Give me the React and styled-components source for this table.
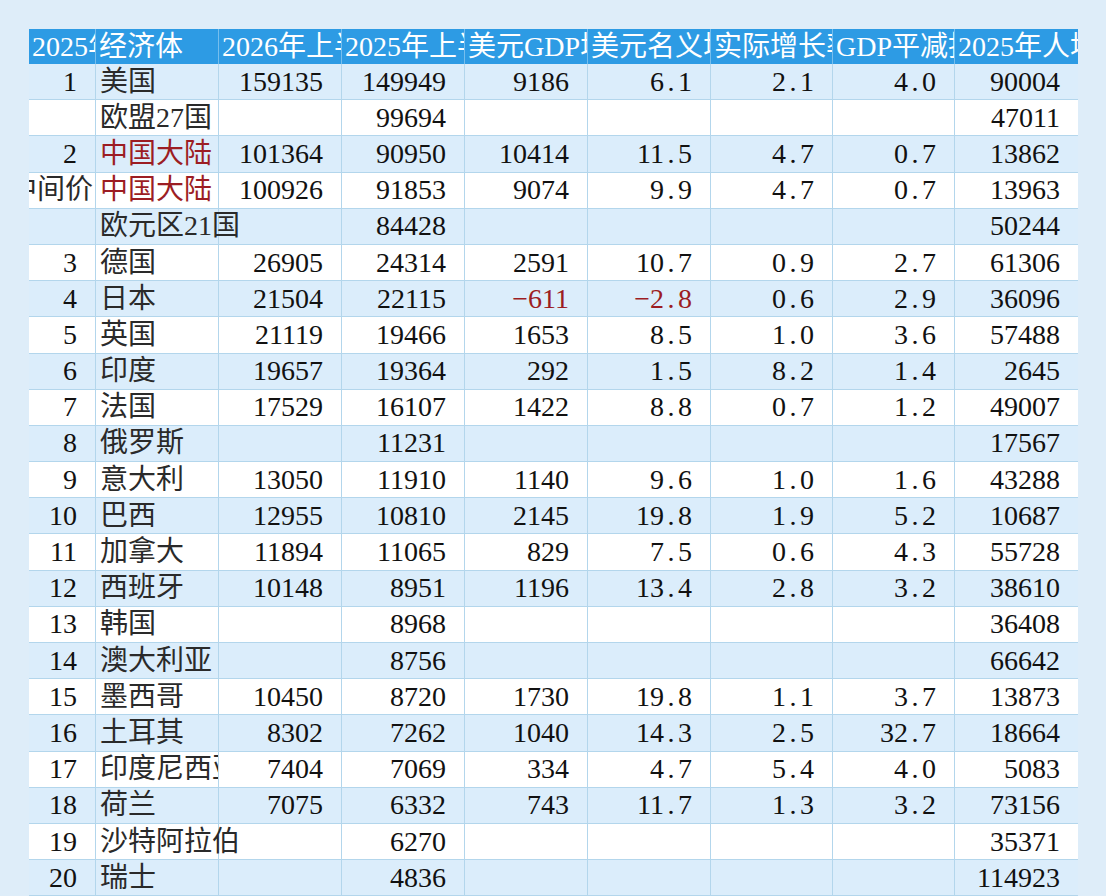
import React from "react";
import styled, { createGlobalStyle } from "styled-components";

const GlobalStyle = createGlobalStyle`
  html, body {
    margin: 0;
    padding: 0;
    background: #deedf9;
    overflow: hidden;
  }
  body {
    font-family: "Liberation Serif", "Noto Sans CJK SC", serif;
  }
`;

const COLS = "67px 123px 123px 123px 123px 123px 122px 122px 123px";

const Page = styled.div`
  width: 1106px;
  height: 896px;
  box-sizing: border-box;
  padding: 29px 28px 0 29px;
  background: #deedf9;
`;

const Table = styled.div`
  width: 1049px;
  display: flex;
  flex-direction: column;
`;

const HeaderRow = styled.div`
  display: grid;
  grid-template-columns: ${COLS};
  height: 35px;
  background: #2d9be4;
`;

const HeaderCell = styled.div`
  display: flex;
  align-items: center;
  justify-content: flex-start;
  overflow: hidden;
  white-space: nowrap;
  padding-left: 3px;
  border-right: 1px solid rgba(255, 255, 255, 0.35);
  color: #ffffff;
  font-size: 28px;
  line-height: 1;
  &:last-child {
    border-right: none;
  }
`;

const Row = styled.div`
  display: grid;
  grid-template-columns: ${COLS};
  height: 36.2px;
  box-sizing: border-box;
  border-bottom: 1px solid #b3d6ec;
  background: ${(p) => (p.$stripe ? "#dbedfb" : "#ffffff")};
`;

const Cell = styled.div`
  position: relative;
  z-index: ${(p) => (p.$spill ? 2 : 1)};
  display: flex;
  align-items: center;
  justify-content: ${(p) => (p.$align === "left" ? "flex-start" : "flex-end")};
  overflow: ${(p) => (p.$spill ? "visible" : "hidden")};
  white-space: nowrap;
  box-sizing: border-box;
  padding-left: ${(p) => (p.$align === "left" ? "4px" : "0")};
  padding-right: ${(p) => (p.$align === "left" ? "0" : `${p.$pr ?? 18}px`)};
  border-right: 1px solid #b3d6ec;
  font-size: 28px;
  line-height: 1;
  color: ${(p) => (p.$red ? "#9c1d23" : p.$cjk ? "#2a2a2a" : "#111111")};
  &:last-child {
    border-right: none;
  }
`;

const Text = styled.span`
  flex: none;
`;

const Dot = styled.span`
  display: inline-block;
  width: 0.5em;
  text-align: center;
`;

const headers = [
  "2025年排名",
  "经济体",
  "2026年上半年GDP",
  "2025年上半年GDP",
  "美元GDP增量",
  "美元名义增速",
  "实际增长率",
  "GDP平减指数",
  "2025年人均GDP",
];

const rows = [
  ["1", "美国", "159135", "149949", "9186", "6.1", "2.1", "4.0", "90004"],
  ["", "欧盟27国", "", "99694", "", "", "", "", "47011"],
  ["2", "中国大陆", "101364", "90950", "10414", "11.5", "4.7", "0.7", "13862", true],
  ["中间价", "中国大陆", "100926", "91853", "9074", "9.9", "4.7", "0.7", "13963", true],
  ["", "欧元区21国", "", "84428", "", "", "", "", "50244"],
  ["3", "德国", "26905", "24314", "2591", "10.7", "0.9", "2.7", "61306"],
  ["4", "日本", "21504", "22115", "-611", "-2.8", "0.6", "2.9", "36096"],
  ["5", "英国", "21119", "19466", "1653", "8.5", "1.0", "3.6", "57488"],
  ["6", "印度", "19657", "19364", "292", "1.5", "8.2", "1.4", "2645"],
  ["7", "法国", "17529", "16107", "1422", "8.8", "0.7", "1.2", "49007"],
  ["8", "俄罗斯", "", "11231", "", "", "", "", "17567"],
  ["9", "意大利", "13050", "11910", "1140", "9.6", "1.0", "1.6", "43288"],
  ["10", "巴西", "12955", "10810", "2145", "19.8", "1.9", "5.2", "10687"],
  ["11", "加拿大", "11894", "11065", "829", "7.5", "0.6", "4.3", "55728"],
  ["12", "西班牙", "10148", "8951", "1196", "13.4", "2.8", "3.2", "38610"],
  ["13", "韩国", "", "8968", "", "", "", "", "36408"],
  ["14", "澳大利亚", "", "8756", "", "", "", "", "66642"],
  ["15", "墨西哥", "10450", "8720", "1730", "19.8", "1.1", "3.7", "13873"],
  ["16", "土耳其", "8302", "7262", "1040", "14.3", "2.5", "32.7", "18664"],
  ["17", "印度尼西亚", "7404", "7069", "334", "4.7", "5.4", "4.0", "5083"],
  ["18", "荷兰", "7075", "6332", "743", "11.7", "1.3", "3.2", "73156"],
  ["19", "沙特阿拉伯", "", "6270", "", "", "", "", "35371"],
  ["20", "瑞士", "", "4836", "", "", "", "", "114923"],
];

function Num({ value }) {
  const v = value.replace("-", "\u2212");
  if (!v.includes(".")) return <Text>{v}</Text>;
  const [a, b] = v.split(".");
  return (
    <Text>
      {a}
      <Dot>.</Dot>
      {b}
    </Text>
  );
}

export default function App() {
  return (
    <>
      <GlobalStyle />
      <Page>
        <Table>
          <HeaderRow>
            {headers.map((h) => (
              <HeaderCell key={h}>{h}</HeaderCell>
            ))}
          </HeaderRow>
          {rows.map((r, i) => {
            const [rank, name, ...nums] = r;
            const redName = r[9] === true;
            const spill = nums[0] === "";
            const rankIsText = rank === "中间价";
            return (
              <Row key={i} $stripe={i % 2 === 0}>
                <Cell $cjk={rankIsText} $pr={rankIsText ? 2 : 18}>
                  <Text>{rank}</Text>
                </Cell>
                <Cell $align="left" $cjk $red={redName} $spill={spill}>
                  <Text>{name}</Text>
                </Cell>
                {nums.slice(0, 7).map((n, j) => (
                  <Cell key={j} $red={n.startsWith("-")}>
                    {n ? <Num value={n} /> : null}
                  </Cell>
                ))}
              </Row>
            );
          })}
        </Table>
      </Page>
    </>
  );
}
